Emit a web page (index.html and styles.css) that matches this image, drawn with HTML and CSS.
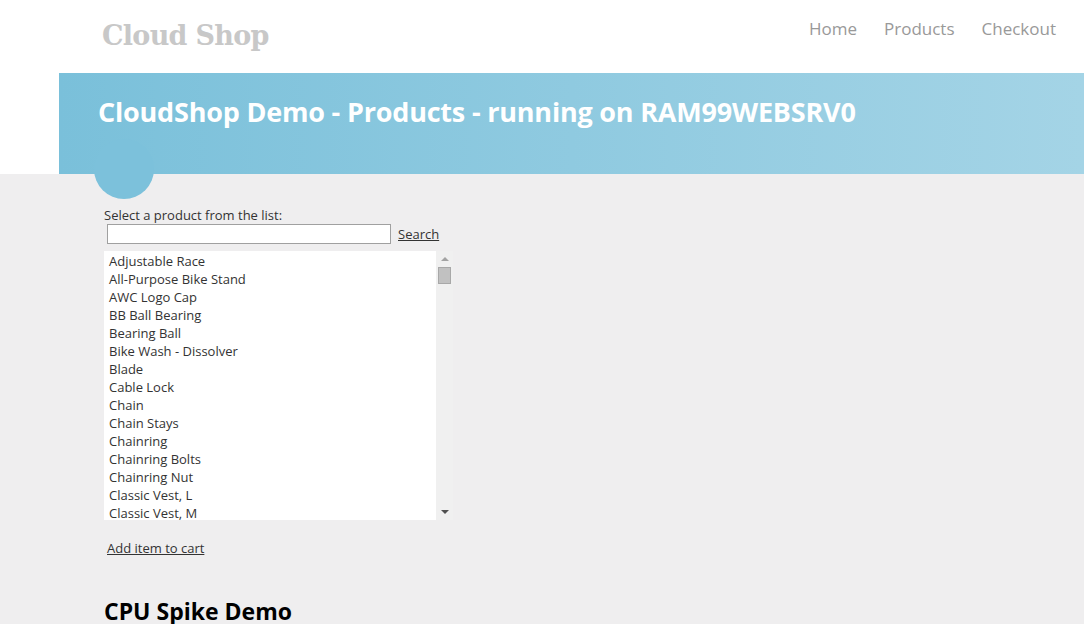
FILE: index.html
```html
<!DOCTYPE html>
<html>
<head>
<meta charset="utf-8">
<title>CloudShop Demo - Products</title>
<link rel="stylesheet" href="styles.css">
</head>
<body>
<header class="site-header">
  <p class="site-title">Cloud Shop</p>
  <nav class="menu">
    <a href="#">Home</a>
    <a href="#">Products</a>
    <a href="#">Checkout</a>
  </nav>
</header>
<section class="featured">
  <div class="banner">
    <h1>CloudShop Demo - Products - running on RAM99WEBSRV0</h1>
  </div>
</section>
<main class="main">
  <div class="circle"></div>
  <label class="prompt">Select a product from the list:</label>
  <div class="search-row">
    <input class="search-box" type="text">
    <a href="#" class="link">Search</a>
  </div>
  <div class="listbox">
    <ul class="items">
      <li>Adjustable Race</li>
      <li>All-Purpose Bike Stand</li>
      <li>AWC Logo Cap</li>
      <li>BB Ball Bearing</li>
      <li>Bearing Ball</li>
      <li>Bike Wash - Dissolver</li>
      <li>Blade</li>
      <li>Cable Lock</li>
      <li>Chain</li>
      <li>Chain Stays</li>
      <li>Chainring</li>
      <li>Chainring Bolts</li>
      <li>Chainring Nut</li>
      <li>Classic Vest, L</li>
      <li>Classic Vest, M</li>
    </ul>
    <div class="scrollbar">
      <span class="arrow up"></span>
      <div class="track"><div class="thumb"></div></div>
      <span class="arrow down"></span>
    </div>
  </div>
  <div class="cart-row"><a href="#" class="link">Add item to cart</a></div>
  <h2 class="section-title">CPU Spike Demo</h2>
</main>
</body>
</html>
```
FILE: styles.css
```css
html, body {
  margin: 0;
  padding: 0;
}
body {
  background: #efeeef;
  font-family: "Open Sans", "Noto Sans", sans-serif;
  color: #333;
  overflow: hidden;
}
.site-header {
  background: #fff;
  height: 73px;
  display: flex;
  justify-content: space-between;
  align-items: flex-start;
  padding: 0 28px 0 102px;
}
.site-title {
  margin: 18px 0 0;
  font-family: "DejaVu Serif", serif;
  font-weight: bold;
  font-size: 27px;
  letter-spacing: -0.7px;
  color: #c8c8c8;
  line-height: 36px;
}
.menu {
  display: flex;
  gap: 27px;
  margin-top: 17px;
}
.menu a {
  color: #999;
  text-decoration: none;
  font-size: 17px;
  line-height: 24px;
}
.featured {
  background: #fff;
  padding-left: 59px;
}
.banner {
  height: 101px;
  background: linear-gradient(to right, #7ac0da 0%, #a4d4e6 100%);
  box-sizing: border-box;
  padding: 21px 0 0 39px;
}
.banner h1 {
  margin: 0;
  color: #fff;
  font-size: 27px;
  font-weight: bold;
  line-height: 36px;
  letter-spacing: -0.2px;
}
.main {
  position: relative;
  padding: 33px 0 0 104px;
}
.circle {
  position: absolute;
  left: 94px;
  top: -35px;
  width: 60px;
  height: 60px;
  border-radius: 50%;
  background: #7cc1db;
}
.prompt {
  display: block;
  font-size: 13px;
  line-height: 16px;
  color: #333;
}
.search-row {
  display: flex;
  align-items: center;
  gap: 7px;
  padding-left: 3px;
  margin-top: 1px;
}
.search-box {
  width: 284px;
  height: 20px;
  box-sizing: border-box;
  border: 1px solid #a0a0a0;
  background: #fff;
  margin: 0;
  padding: 0;
}
.link {
  color: #333;
  font-size: 13px;
  text-decoration: underline;
}
.listbox {
  margin-top: 7px;
  width: 349px;
  height: 269px;
  display: flex;
  background: #fff;
  overflow: hidden;
}
.items {
  list-style: none;
  margin: 0;
  padding: 1px 0 0 5px;
  flex: 1;
  font-size: 13px;
  line-height: 18px;
  color: #333;
}
.scrollbar {
  width: 17px;
  background: #f0f0f0;
  display: flex;
  flex-direction: column;
  align-items: center;
}
.arrow {
  width: 0;
  height: 0;
  border-left: 4px solid transparent;
  border-right: 4px solid transparent;
}
.arrow.up {
  margin-top: 6px;
  border-bottom: 4px solid #a3a3a3;
}
.arrow.down {
  margin-bottom: 6px;
  border-top: 4px solid #505050;
}
.track {
  flex: 1;
  width: 100%;
  padding-top: 6px;
  display: flex;
  justify-content: center;
}
.thumb {
  width: 13px;
  height: 17px;
  box-sizing: border-box;
  background: #c1c1c1;
  border: 1px solid #a8a8a8;
}
.cart-row {
  margin-top: 18px;
  padding-left: 3px;
  line-height: 18px;
}
.section-title {
  margin: 39px 0 0;
  font-size: 23px;
  font-weight: bold;
  color: #000;
  line-height: 30px;
}
```
